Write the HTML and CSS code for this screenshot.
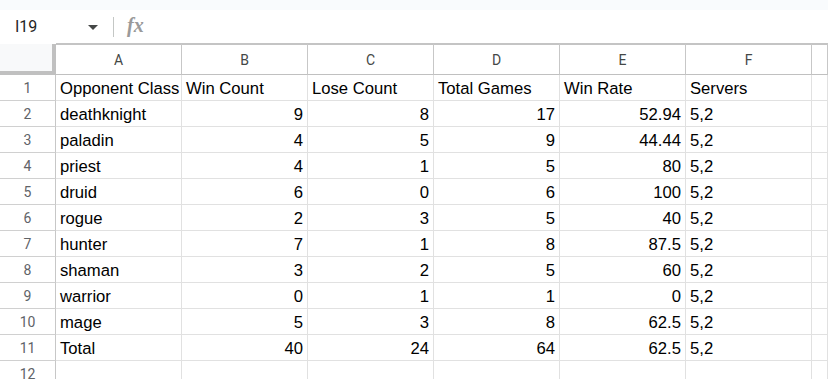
FILE: index.html
```html
<!DOCTYPE html>
<html lang="en">
<head>
    <meta charset="UTF-8">
    <title>Opponent Class Stats</title>
    <link rel="stylesheet" href="styles.css">
</head>
<body>
    <!-- Faixa superior -->
    <div class="top-strip"></div>

    <!-- Barra de fórmula -->
    <div class="formula-bar">
        <div class="name-box">
            <span class="cell-ref">I19</span>
            <span class="caret"></span>
        </div>
        <div class="divider"></div>
        <span class="fx">fx</span>
    </div>

    <!-- Planilha -->
    <div class="sheet" id="sheet">
        <div class="corner"></div>
    </div>

    <script>
        const sheet = document.getElementById("sheet");
        const colunas = ["A", "B", "C", "D", "E", "F", ""];

        const dados = [
            ["Opponent Class", "Win Count", "Lose Count", "Total Games", "Win Rate", "Servers"],
            ["deathknight", 9, 8, 17, 52.94, "5,2"],
            ["paladin", 4, 5, 9, 44.44, "5,2"],
            ["priest", 4, 1, 5, 80, "5,2"],
            ["druid", 6, 0, 6, 100, "5,2"],
            ["rogue", 2, 3, 5, 40, "5,2"],
            ["hunter", 7, 1, 8, 87.5, "5,2"],
            ["shaman", 3, 2, 5, 60, "5,2"],
            ["warrior", 0, 1, 1, 0, "5,2"],
            ["mage", 5, 3, 8, 62.5, "5,2"],
            ["Total", 40, 24, 64, 62.5, "5,2"],
            []
        ];

        colunas.forEach(letra => {
            const th = document.createElement("div");
            th.className = "col-head";
            th.textContent = letra;
            sheet.appendChild(th);
        });

        dados.forEach((linha, i) => {
            const rh = document.createElement("div");
            rh.className = "row-head";
            rh.textContent = i + 1;
            sheet.appendChild(rh);

            for (let c = 0; c < 7; c++) {
                const cell = document.createElement("div");
                const valor = linha[c];
                cell.className = typeof valor === "number" ? "cell num" : "cell";
                cell.textContent = valor === undefined ? "" : valor;
                sheet.appendChild(cell);
            }
        });
    </script>
</body>
</html>
```

FILE: styles.css
```css
/* Geral */
body {
    margin: 0;
    width: 828px;
    height: 379px;
    overflow: hidden;
    background-color: #fff;
    font-family: 'Liberation Sans', Arial, sans-serif;
}

.top-strip {
    height: 10px;
    background-color: #f9fbfd;
}

/* Barra de fórmula */
.formula-bar {
    height: 33px;
    display: flex;
    align-items: center;
    background-color: #fff;
}

.name-box {
    width: 113px;
    height: 100%;
    display: flex;
    align-items: center;
    box-sizing: border-box;
    padding-left: 15px;
}

.cell-ref {
    font-family: Roboto, sans-serif;
    font-size: 16px;
    color: #1f1f1f;
    flex: 1;
}

.caret {
    width: 0;
    height: 0;
    border-left: 5px solid transparent;
    border-right: 5px solid transparent;
    border-top: 5px solid #444746;
    margin-right: 15px;
    margin-top: 2px;
}

.divider {
    width: 1px;
    height: 20px;
    background-color: #c4c7c5;
}

.fx {
    font-family: 'Liberation Serif', serif;
    font-style: italic;
    font-weight: bold;
    font-size: 20px;
    color: #9a9a9a;
    margin-left: 13px;
    margin-bottom: 2px;
}

/* Grade da planilha */
.sheet {
    display: grid;
    grid-template-columns: 56px repeat(6, 126px) 1fr;
    grid-template-rows: 32px;
    grid-auto-rows: 26px;
}

.sheet > div {
    box-sizing: border-box;
    border-right: 1px solid #e1e1e1;
    border-bottom: 1px solid #e1e1e1;
}

.sheet > .corner {
    margin-top: 1px;
    background-color: #f8f9fa;
    border-right: 4px solid #c0c0c0;
    border-bottom: 4px solid #c0c0c0;
}

.sheet > .col-head {
    border-top: 2px solid #c4c4c4;
    border-right-color: #c7c7c7;
    border-bottom-color: #c0c0c0;
    display: flex;
    align-items: center;
    justify-content: center;
    font-family: Roboto, sans-serif;
    font-size: 14px;
    color: #444746;
}

.sheet > .row-head {
    border-right-color: #c7c7c7;
    border-bottom-color: #d0d0d0;
    display: flex;
    align-items: center;
    justify-content: center;
    font-family: Roboto, sans-serif;
    font-size: 14px;
    color: #5f6368;
}

.cell {
    display: flex;
    align-items: flex-end;
    padding: 0 4px 1px;
    font-size: 16.67px;
    color: #000;
    white-space: nowrap;
    overflow: hidden;
}

.cell.num {
    justify-content: flex-end;
}
```
